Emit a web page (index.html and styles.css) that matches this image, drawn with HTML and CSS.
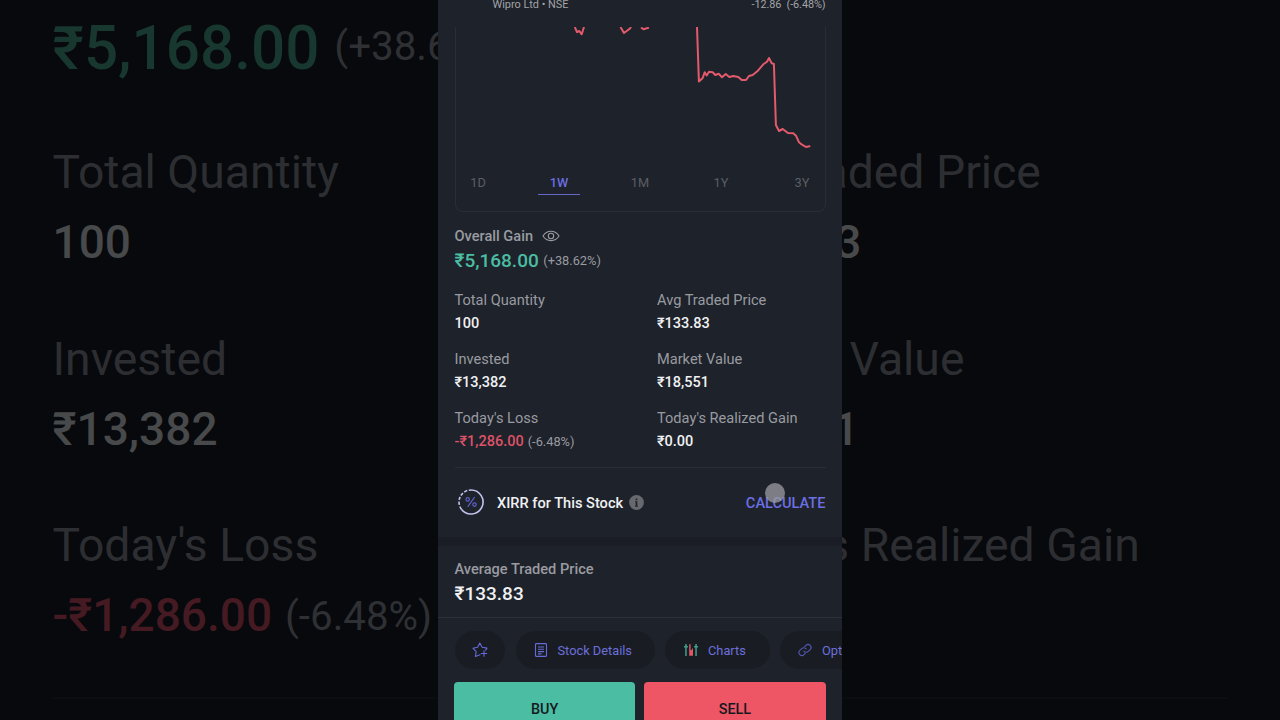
FILE: index.html
```html
<!DOCTYPE html>
<html lang="en">
<head>
<meta charset="utf-8">
<title>Wipro Ltd</title>
<link rel="stylesheet" href="styles.css">
</head>
<body>
<div class="stage">
  <section class="backdrop" aria-hidden="true">
    <div class="backdrop-gain"><span class="gain">₹5,168.00</span><span class="pct">(+38.62%)</span></div>
    <div class="backdrop-stats">
      <div class="stat"><div class="label">Total Quantity</div><div class="value">100</div></div>
      <div class="stat"><div class="label">Avg Traded Price</div><div class="value">₹133.83</div></div>
      <div class="stat"><div class="label">Invested</div><div class="value">₹13,382</div></div>
      <div class="stat"><div class="label">Market Value</div><div class="value">₹18,551</div></div>
      <div class="stat"><div class="label">Today's Loss</div><div class="value"><span class="loss">-₹1,286.00</span><span class="pct">(-6.48%)</span></div></div>
      <div class="stat"><div class="label">Today's Realized Gain</div></div>
    </div>
    <div class="backdrop-rule"></div>
  </section>

  <main class="phone">
    <header class="quote"><span>Wipro Ltd • NSE</span><span class="change">-12.86&nbsp; (-6.48%)</span></header>

    <section class="chart-card">
      <svg class="chart" viewBox="456 27 370 145" width="370" height="145">
        <g fill="none" stroke="#e35a6c" stroke-width="2" stroke-linejoin="round">
          <path d="M574.8 27 577 32.2 579.3 31 581.7 34.3 584 27"/>
          <path d="M620.500 27 624 33 630 28.5 631 27"/>
          <path d="M641 27.5 643.5 29.3 649 27.5"/>
          <path stroke-linecap="round" d="M697 27 698.9 81.5 702.5 78.3 704.7 72.3 706.7 75.5 709 71.7 712.7 72.3 715.3 75 718.7 73.8 722 77.2 725.7 74 729.3 77 733.3 76 738.3 77 741.7 80 746 80 749 76 752.7 75 757.3 71.3 763.3 64.3 767 61.7 769 58 771.7 63.3 773.9 64 775.9 125 779 131 782.7 129 788 133 793.3 133.3 796 135.7 799 142.3 802 144.7 806 147 809.5 146.2"/>
        </g>
      </svg>
      <nav class="ranges">
        <span class="range">1D</span><span class="range active">1W</span><span class="range">1M</span><span class="range">1Y</span><span class="range">3Y</span>
      </nav>
    </section>

    <section class="overall">
      <div class="overall-title">Overall Gain
        <svg width="18" height="14" viewBox="0 0 18 14" fill="none" stroke="#9a9ca1" stroke-width="1.1"><path d="M1 7C4.8.6 13.2.6 17 7 13.2 13.2 4.8 13.2 1 7Z"/><circle cx="9" cy="7" r="2.7"/></svg>
      </div>
      <div class="overall-value"><span class="gain">₹5,168.00</span><span class="pct">(+38.62%)</span></div>
    </section>

    <section class="stats">
      <div class="stat"><div class="label">Total Quantity</div><div class="value">100</div></div>
      <div class="stat"><div class="label">Avg Traded Price</div><div class="value">₹133.83</div></div>
      <div class="stat"><div class="label">Invested</div><div class="value">₹13,382</div></div>
      <div class="stat"><div class="label">Market Value</div><div class="value">₹18,551</div></div>
      <div class="stat"><div class="label">Today's Loss</div><div class="value"><span class="loss">-₹1,286.00</span><span class="pct">(-6.48%)</span></div></div>
      <div class="stat"><div class="label">Today's Realized Gain</div><div class="value">₹0.00</div></div>
    </section>

    <section class="xirr">
      <svg class="xirr-icon" width="28" height="28" viewBox="0 0 28 28" fill="none">
        <path d="M14 2A12 12 0 1 1 4.4 21.2" stroke="#c3c1ee" stroke-width="1.6"/>
        <path d="M4.4 21.2A12 12 0 0 1 14 2" stroke="#c3c1ee" stroke-width="1.6" stroke-dasharray="3.2 1.6"/>
        <g stroke="#5c60c8" stroke-width="1.2"><path d="m17.4 9.4-6.4 9" stroke-linecap="round"/><circle cx="10.7" cy="11.4" r="1.7"/><circle cx="17.5" cy="16.6" r="1.7"/></g>
      </svg>
      <span class="xirr-title">XIRR for This Stock</span>
      <svg class="info" width="15" height="15" viewBox="0 0 15 15"><circle cx="7.5" cy="7.5" r="7.4" fill="#67696e"/><path d="M6 6.3h2.4v4.4H9v1H6v-1h.6V7.3H6zM6.6 3.4h1.8v1.8H6.6z" fill="#22262e"/></svg>
      <span class="calculate">CALCULATE<i class="touch"></i></span>
    </section>

    <div class="band"></div>

    <section class="average">
      <div class="average-label">Average Traded Price</div>
      <div class="average-value">₹133.83</div>
    </section>

    <nav class="pills">
      <span class="pill pill-star">
        <svg width="16" height="16" viewBox="0 0 16 16" fill="none" stroke="#666ad9" stroke-width="1.1" stroke-linejoin="round" stroke-linecap="round"><path d="M13.6 8.2 15 6.1 10.2 5.2 7.8 1 5.6 5.2.9 6.2l3.3 3.4-.8 4.9 4.6-1.7M12 8.8v5.4M9.3 11.5h5.4"/></svg>
      </span>
      <span class="pill pill-details">
        <svg width="14" height="16" viewBox="0 0 14 16" fill="none" stroke="#666ad9" stroke-width="1.1"><rect x="1.5" y="1.6" width="11" height="12.8" rx=".8"/><path d="M4 5h6M4 7.3h6M4 9.6h6M4 11.9h3.5"/></svg>
        Stock Details
      </span>
      <span class="pill pill-charts">
        <svg width="16" height="14" viewBox="0 0 16 14"><g fill="#3f9f8b"><path d="M2.2 1h1.5v12H2.2zM1 3h3.9v1.4H1zM12.3 1h1.5v12h-1.5zM11.1 3H15v1.4h-3.9z"/></g><path d="M6.2 1.2h1.4V7H9V5.5h1v7.3H6.2z" fill="#e35566"/></svg>
        Charts
      </span>
      <span class="pill pill-options">
        <svg width="14" height="14" viewBox="0 0 24 24" fill="none" stroke="#5558b6" stroke-width="1.8" stroke-linecap="round"><path d="M10 14a5 5 0 0 0 7.5.5l3.3-3.3a5 5 0 0 0-7.1-7.1L11.5 6.3"/><path d="M14 10a5 5 0 0 0-7.5-.5l-3.3 3.3a5 5 0 0 0 7.1 7.1l2.2-2.2"/></svg>
        Options
      </span>
    </nav>

    <div class="actions"><span class="action buy">BUY</span><span class="action sell">SELL</span></div>
  </main>
</div>
</body>
</html>
```
FILE: styles.css
```css
* { box-sizing: border-box; }
body { margin: 0; background: #07090d; font-family: Roboto, "Noto Sans", sans-serif; }
svg { display: block; flex: none; }
.stage { display: grid; grid-template: 720px / 1280px; width: 1280px; height: 720px; overflow: hidden; }
.backdrop, .phone { grid-area: 1 / 1; }

.phone { z-index: 1; justify-self: center; display: flex; flex-direction: column; width: 404px; height: 720px; padding: 0 16.5px; overflow: hidden; background: #1e222a; color: #999ba1; font-size: 14.6px; }
.quote { display: flex; justify-content: space-between; flex: none; height: 27px; padding-left: 38px; margin-top: -3px; margin-bottom: 3px; font-size: 10.9px; line-height: 15px; color: #a2a4a9; }
.change { letter-spacing: -.1px; }
.chart-card { flex: none; height: 185px; border: 1px solid #292d35; border-top: 0; border-radius: 0 0 8px 8px; }
.ranges { display: flex; justify-content: space-between; padding: 0 1.5px 0 1.5px; }
.range { width: 42px; height: 23px; line-height: 22px; font-size: 12.8px; text-align: center; color: #5b5e65; }
.active { color: #6a6ee0; font-weight: 500; border-bottom: 1.5px solid #6468c8; }

.overall { flex: none; padding-top: 13px; height: 78px; }
.overall-title { display: flex; align-items: center; gap: 9px; height: 22px; font-weight: 500; }
.overall-value { display: flex; align-items: center; gap: 4.5px; height: 27px; }
.gain { font-size: 19px; font-weight: 500; color: #4abda3; }
.pct { font-size: 12.8px; font-weight: 400; color: #999ba1; }
.stats { flex: none; display: grid; grid-template-columns: 202.5px 1fr; grid-auto-rows: 59px; height: 177.5px; border-bottom: 1px solid #292d35; }
.label, .value { white-space: nowrap; }
.label { line-height: 21px; }
.value { line-height: 25px; font-weight: 500; color: #f0f1f3; font-size: 14.5px; }
.loss { color: #dc5268; margin-right: 4px; }
.xirr { flex: none; display: flex; align-items: center; height: 69px; padding: 2px 0 0 2.5px; font-weight: 500; }
.xirr-icon, .info { margin-top: -2px; }
.xirr-title { color: #f0f1f3; margin: 0 5.5px 0 12px; }
.calculate { position: relative; margin-left: auto; color: #6c6fe2; }
.touch { position: absolute; left: 19px; top: -11px; width: 20px; height: 20px; border-radius: 50%; background: rgba(156, 156, 164, .75); }
.band { flex: none; height: 9px; margin: 0 -16.5px; background: #1a1d25; }
.average { flex: none; height: 72px; margin: 0 -16.5px; padding: 12px 16.5px 0; border-bottom: 1px solid #2d3138; font-weight: 500; }
.average-label { line-height: 23px; }
.average-value { line-height: 25px; font-size: 19px; color: #f0f1f3; }
.pills { flex: none; display: flex; gap: 10.5px; padding: 13px 0; margin-right: -16.5px; overflow: hidden; }
.pill { flex: none; display: flex; align-items: center; height: 38px; padding-top: 1px; border-radius: 19px; background: #191d23; color: #6c6fdc; font-size: 12.8px; }
.pill-star { width: 50.5px; justify-content: center; }
.pill-details { width: 139px; padding-left: 18px; gap: 10px; }
.pill-charts { width: 104.5px; padding-left: 18px; gap: 9px; }
.pill-options { width: 105px; padding-left: 18px; gap: 10px; }
.actions { flex: none; display: flex; gap: 9px; height: 55px; margin-left: -.5px; }
.action { flex: 1; border-radius: 4px; font-weight: 500; font-size: 14.4px; text-align: center; line-height: 56px; color: #15191f; }
.buy { background: #4abda3; }
.sell { background: #ee5565; }

.backdrop { padding: 12px 52.5px 0 52.5px; color: #2d2e32; font-size: 46.3px; }
.backdrop-gain { display: flex; align-items: center; gap: 15px; height: 72px; }
.backdrop .gain { font-size: 60.2px; color: #18372f; }
.backdrop .pct { font-size: 40.3px; color: #2f3034; }
.backdrop-gain .pct { margin-top: -4px; }
.backdrop-stats { display: grid; grid-template-columns: 641.5px 1fr; grid-auto-rows: 186.5px; padding-top: 53px; }
.backdrop .label, .backdrop .value { line-height: 70px; }
.backdrop .value { font-size: 46px; color: #48494b; }
.backdrop .loss { color: #461a22; margin-right: 13px; }
.backdrop .value .pct { vertical-align: 1px; line-height: 1; }
.backdrop-rule { height: 2px; background: #0b0d11; }
```
